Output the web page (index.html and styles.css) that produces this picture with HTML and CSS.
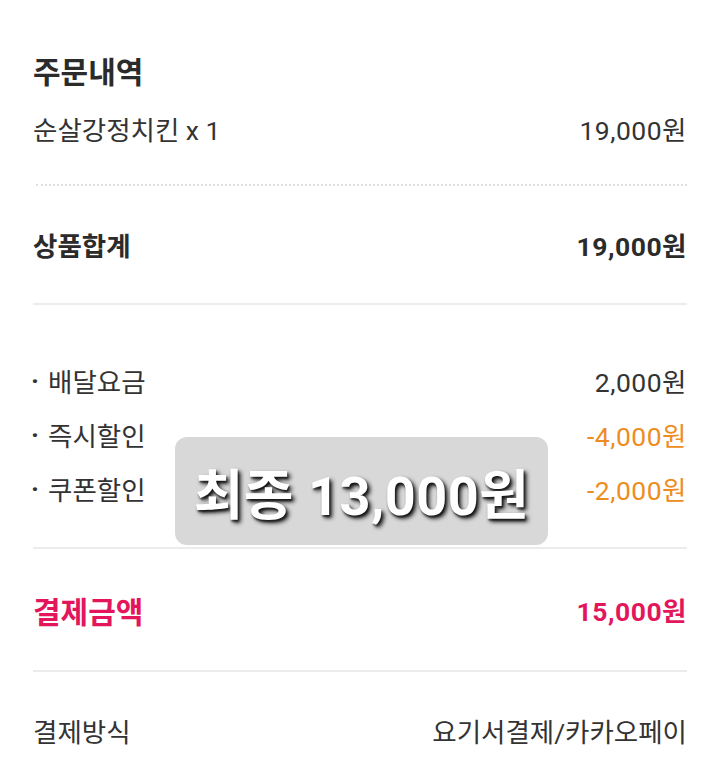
FILE: index.html
```html
<!DOCTYPE html>
<html lang="ko">
<head>
<meta charset="utf-8">
<link rel="stylesheet" href="styles.css">
</head>
<body>
<div class="page">
  <section class="order">
    <div class="row heading"><span>주문내역</span></div>
    <div class="row item"><span>순살강정치킨 x 1</span><span class="num">19,000원</span></div>
  </section>
  <div class="dotted"></div>
  <div class="row block bold"><span>상품합계</span><span class="num">19,000원</span></div>
  <div class="divider"></div>
  <section class="fees">
    <div class="row fee"><span class="label"><span class="dot">·</span>배달요금</span><span class="num">2,000원</span></div>
    <div class="row fee"><span class="label"><span class="dot">·</span>즉시할인</span><span class="num discount">-4,000원</span></div>
    <div class="row fee"><span class="label"><span class="dot">·</span>쿠폰할인</span><span class="num discount">-2,000원</span></div>
    <div class="badge">최종 13,000원</div>
  </section>
  <div class="divider"></div>
  <div class="row block total"><span>결제금액</span><span class="num">15,000원</span></div>
  <div class="divider"></div>
  <div class="row block"><span>결제방식</span><span>요기서결제/카카오페이</span></div>
</div>
</body>
</html>
```
FILE: styles.css
```css
html, body {
  margin: 0;
  padding: 0;
  background: #ffffff;
  overflow: hidden;
}
body {
  font-family: Roboto, "Noto Sans CJK KR", sans-serif;
  color: #333333;
  font-size: 26.5px;
}
.page {
  padding: 41px 33px 0 33px;
  display: flex;
  flex-direction: column;
}
.row {
  display: flex;
  justify-content: space-between;
  align-items: center;
}
.order {
  display: flex;
  flex-direction: column;
  padding-bottom: 27px;
}
.heading {
  height: 58px;
  font-size: 30px;
  font-weight: 700;
  color: #2b2b2b;
}
.item {
  height: 58px;
}
.num {
  letter-spacing: 0.5px;
}
.dotted {
  height: 0;
  border-top: 2px dotted #e0e0e0;
  margin-left: 3px;
}
.block {
  height: 117px;
}
.bold {
  font-weight: 700;
  color: #2b2b2b;
}
.divider {
  height: 2px;
  background: #ececec;
}
.fees {
  position: relative;
  padding: 48px 0 32px;
  display: flex;
  flex-direction: column;
}
.fee {
  height: 54px;
}
.label {
  display: flex;
  align-items: center;
}
.dot {
  width: 17px;
  margin-left: -2px;
  font-weight: 700;
}
.discount {
  color: #ee8d1f;
}
.total {
  height: 121px;
  font-size: 30px;
  font-weight: 700;
  color: #e3165b;
}
.total .num {
  font-size: 26.5px;
}
.badge {
  position: absolute;
  left: 142px;
  top: 132px;
  width: 373px;
  height: 108px;
  border-radius: 12px;
  background: #d8d8d8;
  color: #ffffff;
  font-size: 54px;
  font-weight: 700;
  display: flex;
  align-items: center;
  justify-content: center;
  letter-spacing: 0.5px;
  text-shadow: 3px 3px 4px rgba(0, 0, 0, 0.85), 1px 2px 2px rgba(0, 0, 0, 0.6);
}
```
